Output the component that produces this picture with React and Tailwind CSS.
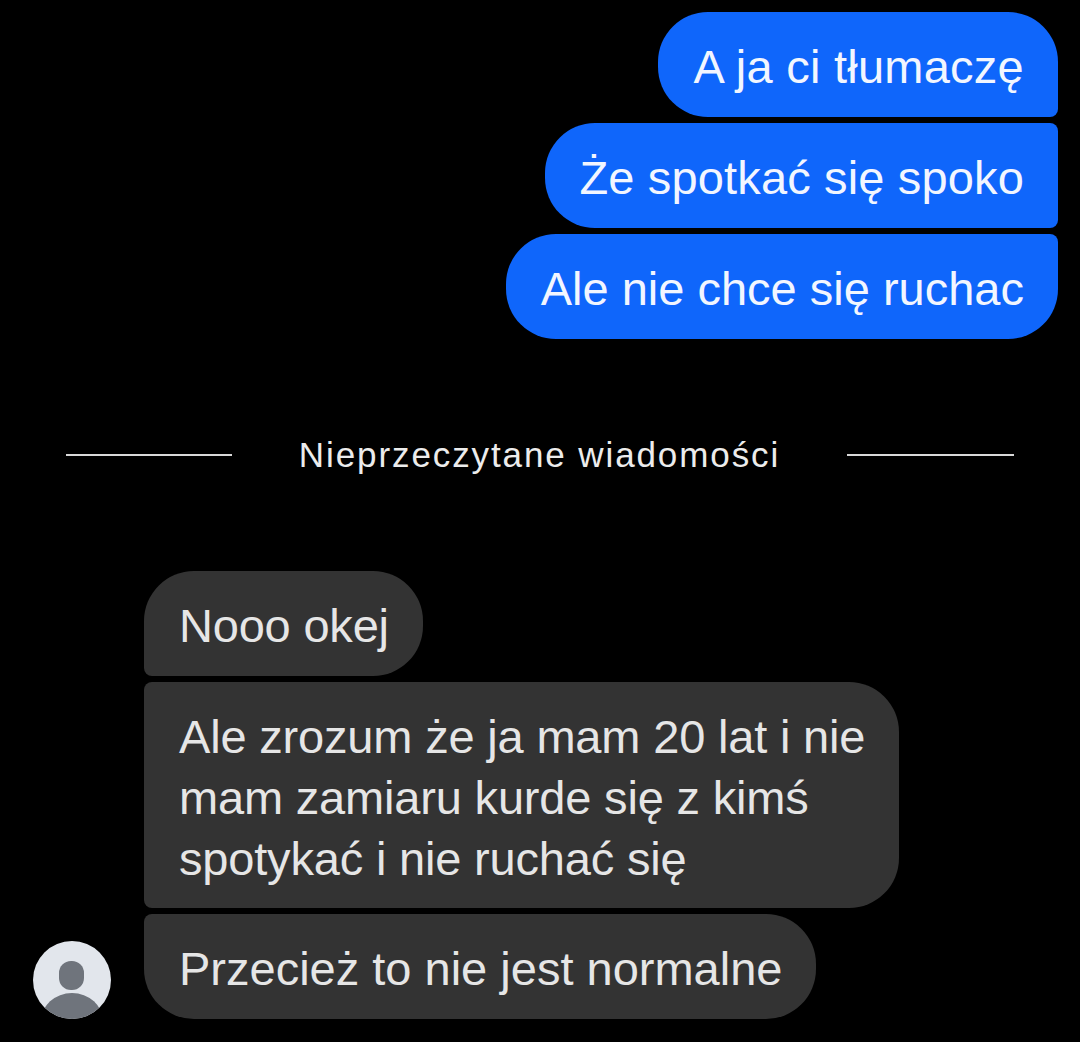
import React from "react";

const sent = [
  { text: "A ja ci tłumaczę", spacing: "tracking-[0.25px]" },
  { text: "Że spotkać się spoko", spacing: "tracking-[0.15px]" },
  { text: "Ale nie chce się ruchac", spacing: "" },
];

function SentBubble({ text, spacing, first, last }) {
  return (
    <div
      className={`bg-[#0f66fb] text-[#f2f6ff] pl-[35px] pr-[34px] pt-[24px] pb-[20px] text-[47px] leading-[61px] rounded-l-[50px] ${spacing} ${
        first ? "rounded-tr-[50px]" : "rounded-tr-[8px]"
      } ${last ? "rounded-br-[50px]" : "rounded-br-[8px]"}`}
    >
      {text}
    </div>
  );
}

function Avatar() {
  return (
    <svg viewBox="0 0 78 78" className="w-[78px] h-[78px] shrink-0">
      <defs>
        <clipPath id="avatarClip">
          <circle cx="39" cy="39" r="39" />
        </clipPath>
      </defs>
      <circle cx="39" cy="39" r="39" fill="#e2e6ec" />
      <g clipPath="url(#avatarClip)" fill="#6f747c">
        <rect x="26" y="20" width="25" height="29" rx="12" />
        <ellipse cx="39" cy="80" rx="31" ry="28" />
      </g>
    </svg>
  );
}

export default function App() {
  return (
    <div className="w-[1080px] h-[1042px] bg-black overflow-hidden font-['Liberation_Sans',sans-serif]">
      <div className="flex flex-col items-end gap-[6px] pt-[12px] pr-[22px]">
        {sent.map((item, i) => (
          <SentBubble key={item.text} text={item.text} spacing={item.spacing} first={i === 0} last={i === sent.length - 1} />
        ))}
      </div>

      <div className="flex items-center justify-between mt-[98px] pl-[66px] pr-[66px] h-[36px]">
        <div className="w-[166px] h-[2px] bg-[#d8d8d8]" />
        <span className="text-[35px] tracking-[1.9px] text-[#ececec] leading-[36px]">Nieprzeczytane wiadomości</span>
        <div className="w-[167px] h-[2px] bg-[#d8d8d8]" />
      </div>

      <div className="flex items-end gap-[33px] pl-[33px] mt-[98px]">
        <Avatar />
        <div className="flex flex-col items-start gap-[6px] text-[47px] leading-[61px] text-[#e6e6e6]">
          <div className="bg-[#333333] pl-[35px] pr-[34px] pt-[24px] pb-[20px] tracking-[-0.2px] rounded-r-[50px] rounded-tl-[50px] rounded-bl-[8px]">
            Nooo okej
          </div>
          <div className="bg-[#333333] pl-[35px] pr-[34px] pt-[24px] pb-[19px] tracking-[-0.18px] rounded-r-[50px] rounded-l-[8px] whitespace-nowrap">
            <div>Ale zrozum że ja mam 20 lat i nie</div>
            <div>mam zamiaru kurde się z kimś</div>
            <div>spotykać i nie ruchać się</div>
          </div>
          <div className="bg-[#333333] pl-[35px] pr-[34px] pt-[24px] pb-[20px] rounded-r-[50px] rounded-bl-[50px] rounded-tl-[8px]">
            Przecież to nie jest normalne
          </div>
        </div>
      </div>
    </div>
  );
}
